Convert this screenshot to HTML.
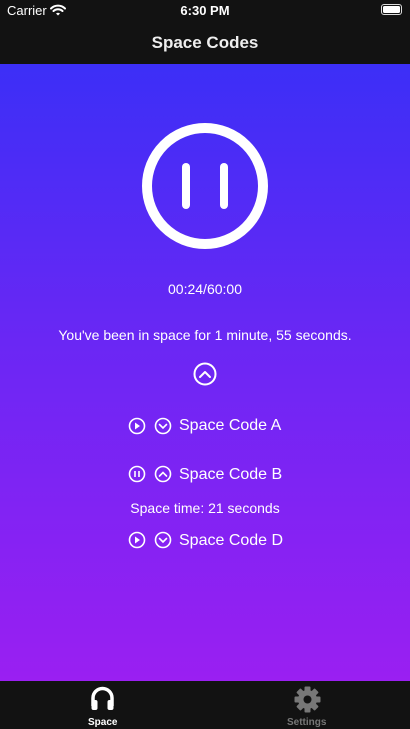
<!DOCTYPE html>
<html><head><meta charset="utf-8"><style>
*{margin:0;padding:0;box-sizing:border-box}
body{width:410px;height:729px;overflow:hidden;font-family:"Liberation Sans",sans-serif;background:#121212;position:relative;color:#fff}
.top{position:absolute;left:0;top:0;width:410px;height:64px;background:#121212}
.main{position:absolute;left:0;top:64px;width:410px;height:617px;background:linear-gradient(180deg,#3c2ff7 0%,#6a27f4 45%,#9a1ff2 100%)}
.tab{position:absolute;left:0;top:681px;width:410px;height:48px;background:#121212}
.t{position:absolute;white-space:nowrap}
.c{left:0;width:410px;text-align:center}
</style></head><body>
<div class="top">
<div class="t" style="left:7px;top:3px;font-size:13px">Carrier</div>
<svg class="t" style="left:50px;top:4px" width="16" height="12" viewBox="0 0 16 12"><path d="M1 4.5a10 10 0 0 1 14 0M3.5 7a6.5 6.5 0 0 1 9 0" stroke="#fff" stroke-width="2" fill="none" stroke-linecap="round"/><path d="M6 9.5a3 3 0 0 1 4 0L8 11.5z" fill="#fff"/></svg>
<div class="t c" style="top:3px;font-size:13px;font-weight:bold">6:30 PM</div>
<div class="t" style="left:381px;top:4px;width:21px;height:11px;border:1px solid #ddd;border-radius:3px;padding:1px"><div style="background:#fff;width:100%;height:100%;border-radius:1.5px"></div></div>
<div class="t c" style="top:33px;font-size:17px;font-weight:bold;color:#eee">Space Codes</div>
</div>
<div class="main"></div>
<svg class="t" style="left:0;top:0" width="410" height="729">
<circle cx="205" cy="186" r="58" stroke="#fff" stroke-width="10" fill="none"/>
<line x1="186" y1="167" x2="186" y2="205" stroke="#fff" stroke-width="8" stroke-linecap="round"/>
<line x1="224" y1="167" x2="224" y2="205" stroke="#fff" stroke-width="8" stroke-linecap="round"/>
<circle cx="205" cy="374" r="10.5" stroke="#fff" stroke-width="2" fill="none"/>
<path d="M200 377l5-5 5 5" stroke="#fff" stroke-width="2" fill="none" stroke-linecap="round" stroke-linejoin="round"/>
<g stroke="#fff" stroke-width="1.6" fill="none">
<circle cx="137" cy="426" r="7.5"/><path d="M135 422.5v7l5-3.5z" fill="#fff" stroke="none"/>
<circle cx="163" cy="426" r="7.5"/><path d="M159.5 424.5l3.5 3.5 3.5-3.5" stroke-linecap="round"/>
<circle cx="137" cy="474" r="7.5"/><path d="M135 471v6M139 471v6"/>
<circle cx="163" cy="474" r="7.5"/><path d="M159.5 476l3.5-3.5 3.5 3.5" stroke-linecap="round"/>
<circle cx="137" cy="540" r="7.5"/><path d="M135 536.5v7l5-3.5z" fill="#fff" stroke="none"/>
<circle cx="163" cy="540" r="7.5"/><path d="M159.5 538.5l3.5 3.5 3.5-3.5" stroke-linecap="round"/>
</g>
</svg>
<div class="t c" style="top:281px;font-size:14px">00:24/60:00</div>
<div class="t c" style="top:327px;font-size:14px">You've been in space for 1 minute, 55 seconds.</div>
<div class="t" style="left:179px;top:417px;font-size:16px">Space Code A</div>
<div class="t" style="left:179px;top:466px;font-size:16px">Space Code B</div>
<div class="t c" style="top:500px;font-size:14px">Space time: 21 seconds</div>
<div class="t" style="left:179px;top:532px;font-size:16px">Space Code D</div>
<div class="tab">
<svg class="t" style="left:90px;top:5px" width="25" height="25" viewBox="0 0 25 25"><path d="M3 20v-8a9.5 9.5 0 0 1 19 0v8" stroke="#fff" stroke-width="3.5" fill="none"/><rect x="1.5" y="14" width="6" height="10" rx="2" fill="#fff"/><rect x="17.5" y="14" width="6" height="10" rx="2" fill="#fff"/></svg>
<div class="t" style="left:88px;top:36px;font-size:10px;font-weight:bold">Space</div>
<svg class="t" style="left:294px;top:5px" width="27" height="27" viewBox="-13.5 -13.5 27 27"><g fill="#777"><circle r="9.5"/><g id="k"><rect x="-3" y="-13" width="6" height="26" rx="1"/></g><use href="#k" transform="rotate(45)"/><use href="#k" transform="rotate(90)"/><use href="#k" transform="rotate(135)"/></g><circle r="4" fill="#121212"/></svg>
<div class="t" style="left:287px;top:36px;font-size:10px;font-weight:bold;color:#777">Settings</div>
</div>
</body></html>
